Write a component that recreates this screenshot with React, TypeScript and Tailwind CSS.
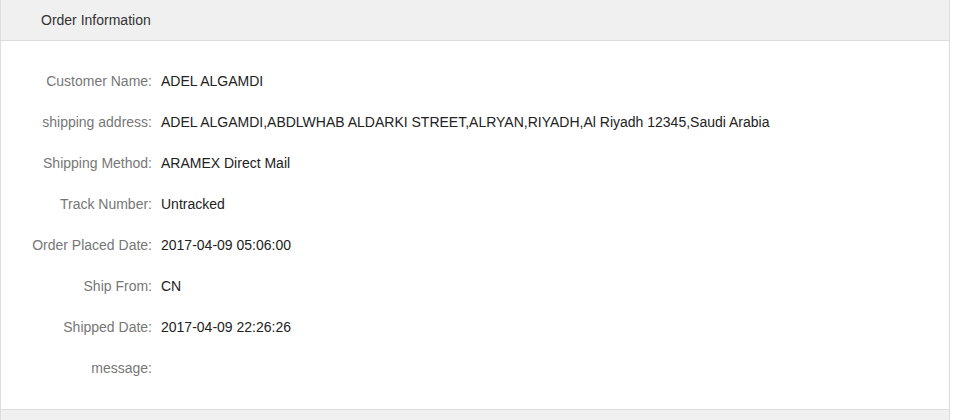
const rows: [string, string][] = [
  ["Customer Name:", "ADEL ALGAMDI"],
  [
    "shipping address:",
    "ADEL ALGAMDI,ABDLWHAB ALDARKI STREET,ALRYAN,RIYADH,Al Riyadh 12345,Saudi Arabia",
  ],
  ["Shipping Method:", "ARAMEX Direct Mail"],
  ["Track Number:", "Untracked"],
  ["Order Placed Date:", "2017-04-09 05:06:00"],
  ["Ship From:", "CN"],
  ["Shipped Date:", "2017-04-09 22:26:26"],
  ["message:", ""],
];

export default function App() {
  return (
    <div className="h-[420px] overflow-hidden bg-white font-['Liberation_Sans',Arial,sans-serif] text-[14px]">
      <div className="w-[950px] border-x border-[#dddddd]">
        <div className="flex h-[41px] items-center border-b border-[#dddddd] bg-[#f0f0f0] pl-[40px] pt-px text-[#333333]">
          Order Information
        </div>
        <div className="pt-[20px] pb-[20px]">
          {rows.map(([label, value]) => (
            <div key={label} className="flex h-[41px] items-center">
              <div className="w-[151px] text-right text-[#777777]">{label}</div>
              <div className="pl-[9px] text-[#222222]">{value}</div>
            </div>
          ))}
        </div>
        <div className="h-[40px] border-t border-[#dddddd] bg-[#f0f0f0]" />
      </div>
    </div>
  );
}
